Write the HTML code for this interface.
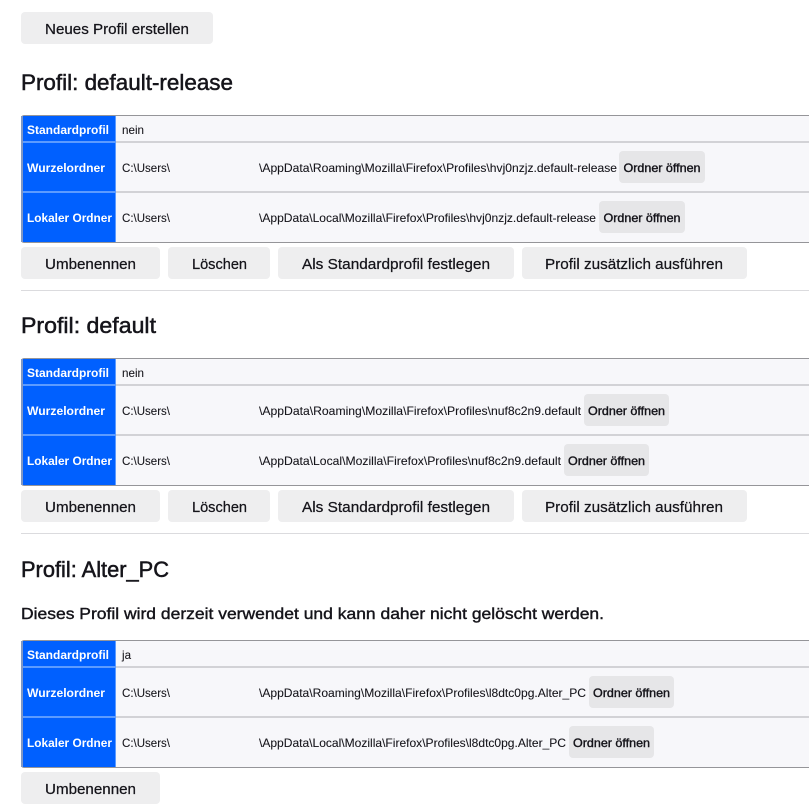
<!DOCTYPE html>
<html lang="de"><head><meta charset="utf-8"><title>Profile</title>
<style>
html,body{margin:0;padding:0;background:#fff;width:809px;height:811px;overflow:hidden}
svg{display:block;font-family:"Liberation Sans",sans-serif}
text{fill:#15141a}
.b{fill:#eeeeef}.o{fill:#e6e6e8}.c{fill:#f7f7fa}.bl{fill:#0060ff}.s{fill:#d2d2d6}.sb{fill:#5c9bff}.bd{fill:#959599}.lb{fill:#7f97c4}
.t15{font-size:15px;stroke:#15141a;stroke-width:.25px}.h{font-size:22px;stroke:#15141a;stroke-width:.5px}.h2{font-size:16px;stroke:#15141a;stroke-width:.4px}
.th{font-size:12px;font-weight:700}text.th{fill:#fff}.td{font-size:12px;stroke:#15141a;stroke-width:.08px}.ob{font-size:12px;stroke:#15141a;stroke-width:.4px}
</style></head><body>
<svg width="809" height="811" viewBox="0 0 809 811" xmlns="http://www.w3.org/2000/svg">
<rect class="b" x="21" y="12" width="192" height="32" rx="4"/>
<text class="t15" x="45" y="34" textLength="144" lengthAdjust="spacingAndGlyphs">Neues Profil erstellen</text>
<text class="h" x="21" y="90" textLength="212" lengthAdjust="spacingAndGlyphs">Profil: default-release</text>

<!-- Table 1 -->
<rect class="bd" x="21" y="115" width="800" height="128" rx="3"/>
<rect class="lb" x="21" y="116" width="2" height="126"/>
<rect class="c" x="116" y="116" width="693" height="126"/>
<rect class="bl" x="23" y="116" width="92" height="126"/>
<rect class="sb" x="115" y="116" width="1" height="126"/>
<rect class="s" x="116" y="141" width="693" height="2"/><rect class="s" x="116" y="191" width="693" height="2"/>
<rect class="sb" x="23" y="141" width="92" height="2"/><rect class="sb" x="23" y="191" width="92" height="2"/>
<text class="th" x="27" y="134" textLength="82" lengthAdjust="spacingAndGlyphs">Standardprofil</text>
<text class="th" x="27" y="172" textLength="78" lengthAdjust="spacingAndGlyphs">Wurzelordner</text>
<text class="th" x="27" y="222" textLength="85" lengthAdjust="spacingAndGlyphs">Lokaler Ordner</text>
<text class="td" x="122" y="134" textLength="22" lengthAdjust="spacingAndGlyphs">nein</text>
<text class="td" x="122" y="172" textLength="48" lengthAdjust="spacingAndGlyphs">C:\Users\</text>
<text class="td" x="259" y="172" textLength="358" lengthAdjust="spacingAndGlyphs">\AppData\Roaming\Mozilla\Firefox\Profiles\hvj0nzjz.default-release</text>
<rect class="o" x="619" y="151" width="86" height="32" rx="4"/>
<text class="ob" x="623.5" y="172" textLength="77" lengthAdjust="spacingAndGlyphs">Ordner öffnen</text>
<text class="td" x="122" y="222" textLength="48" lengthAdjust="spacingAndGlyphs">C:\Users\</text>
<text class="td" x="259" y="222" textLength="337" lengthAdjust="spacingAndGlyphs">\AppData\Local\Mozilla\Firefox\Profiles\hvj0nzjz.default-release</text>
<rect class="o" x="599" y="201" width="86" height="32" rx="4"/>
<text class="ob" x="603.5" y="222" textLength="77" lengthAdjust="spacingAndGlyphs">Ordner öffnen</text>

<rect class="b" x="21" y="247" width="139" height="32" rx="4"/>
<text class="t15" x="45" y="269" textLength="91" lengthAdjust="spacingAndGlyphs">Umbenennen</text>
<rect class="b" x="168" y="247" width="102" height="32" rx="4"/>
<text class="t15" x="192" y="269" textLength="55" lengthAdjust="spacingAndGlyphs">Löschen</text>
<rect class="b" x="278" y="247" width="236" height="32" rx="4"/>
<text class="t15" x="302" y="269" textLength="188" lengthAdjust="spacingAndGlyphs">Als Standardprofil festlegen</text>
<rect class="b" x="522" y="247" width="225" height="32" rx="4"/>
<text class="t15" x="545" y="269" textLength="178" lengthAdjust="spacingAndGlyphs">Profil zusätzlich ausführen</text>
<rect class="s" x="21" y="290" width="788" height="1" opacity=".8"/>

<text class="h" x="21" y="333" textLength="135" lengthAdjust="spacingAndGlyphs">Profil: default</text>

<!-- Table 2 -->
<rect class="bd" x="21" y="358" width="800" height="128" rx="3"/>
<rect class="lb" x="21" y="359" width="2" height="126"/>
<rect class="c" x="116" y="359" width="693" height="126"/>
<rect class="bl" x="23" y="359" width="92" height="126"/>
<rect class="sb" x="115" y="359" width="1" height="126"/>
<rect class="s" x="116" y="384" width="693" height="2"/><rect class="s" x="116" y="434" width="693" height="2"/>
<rect class="sb" x="23" y="384" width="92" height="2"/><rect class="sb" x="23" y="434" width="92" height="2"/>
<text class="th" x="27" y="377" textLength="82" lengthAdjust="spacingAndGlyphs">Standardprofil</text>
<text class="th" x="27" y="415" textLength="78" lengthAdjust="spacingAndGlyphs">Wurzelordner</text>
<text class="th" x="27" y="465" textLength="85" lengthAdjust="spacingAndGlyphs">Lokaler Ordner</text>
<text class="td" x="122" y="377" textLength="22" lengthAdjust="spacingAndGlyphs">nein</text>
<text class="td" x="122" y="415" textLength="48" lengthAdjust="spacingAndGlyphs">C:\Users\</text>
<text class="td" x="259" y="415" textLength="322" lengthAdjust="spacingAndGlyphs">\AppData\Roaming\Mozilla\Firefox\Profiles\nuf8c2n9.default</text>
<rect class="o" x="584" y="394" width="85" height="32" rx="4"/>
<text class="ob" x="588" y="415" textLength="77" lengthAdjust="spacingAndGlyphs">Ordner öffnen</text>
<text class="td" x="122" y="465" textLength="48" lengthAdjust="spacingAndGlyphs">C:\Users\</text>
<text class="td" x="259" y="465" textLength="302" lengthAdjust="spacingAndGlyphs">\AppData\Local\Mozilla\Firefox\Profiles\nuf8c2n9.default</text>
<rect class="o" x="564" y="444" width="85" height="32" rx="4"/>
<text class="ob" x="568" y="465" textLength="77" lengthAdjust="spacingAndGlyphs">Ordner öffnen</text>

<rect class="b" x="21" y="490" width="139" height="32" rx="4"/>
<text class="t15" x="45" y="512" textLength="91" lengthAdjust="spacingAndGlyphs">Umbenennen</text>
<rect class="b" x="168" y="490" width="102" height="32" rx="4"/>
<text class="t15" x="192" y="512" textLength="55" lengthAdjust="spacingAndGlyphs">Löschen</text>
<rect class="b" x="278" y="490" width="236" height="32" rx="4"/>
<text class="t15" x="302" y="512" textLength="188" lengthAdjust="spacingAndGlyphs">Als Standardprofil festlegen</text>
<rect class="b" x="522" y="490" width="225" height="32" rx="4"/>
<text class="t15" x="545" y="512" textLength="178" lengthAdjust="spacingAndGlyphs">Profil zusätzlich ausführen</text>
<rect class="s" x="21" y="533" width="788" height="1" opacity=".8"/>

<text class="h" x="21" y="577" textLength="148" lengthAdjust="spacingAndGlyphs">Profil: Alter_PC</text>
<text class="h2" x="21" y="619" textLength="583" lengthAdjust="spacingAndGlyphs">Dieses Profil wird derzeit verwendet und kann daher nicht gelöscht werden.</text>

<!-- Table 3 -->
<rect class="bd" x="21" y="640" width="800" height="128" rx="3"/>
<rect class="lb" x="21" y="641" width="2" height="126"/>
<rect class="c" x="116" y="641" width="693" height="126"/>
<rect class="bl" x="23" y="641" width="92" height="126"/>
<rect class="sb" x="115" y="641" width="1" height="126"/>
<rect class="s" x="116" y="666" width="693" height="2"/><rect class="s" x="116" y="716" width="693" height="2"/>
<rect class="sb" x="23" y="666" width="92" height="2"/><rect class="sb" x="23" y="716" width="92" height="2"/>
<text class="th" x="27" y="659" textLength="82" lengthAdjust="spacingAndGlyphs">Standardprofil</text>
<text class="th" x="27" y="697" textLength="78" lengthAdjust="spacingAndGlyphs">Wurzelordner</text>
<text class="th" x="27" y="747" textLength="85" lengthAdjust="spacingAndGlyphs">Lokaler Ordner</text>
<text class="td" x="122" y="659" textLength="9" lengthAdjust="spacingAndGlyphs">ja</text>
<text class="td" x="122" y="697" textLength="48" lengthAdjust="spacingAndGlyphs">C:\Users\</text>
<text class="td" x="259" y="697" textLength="327" lengthAdjust="spacingAndGlyphs">\AppData\Roaming\Mozilla\Firefox\Profiles\l8dtc0pg.Alter_PC</text>
<rect class="o" x="589" y="676" width="85" height="32" rx="4"/>
<text class="ob" x="593" y="697" textLength="77" lengthAdjust="spacingAndGlyphs">Ordner öffnen</text>
<text class="td" x="122" y="747" textLength="48" lengthAdjust="spacingAndGlyphs">C:\Users\</text>
<text class="td" x="259" y="747" textLength="307" lengthAdjust="spacingAndGlyphs">\AppData\Local\Mozilla\Firefox\Profiles\l8dtc0pg.Alter_PC</text>
<rect class="o" x="569" y="726" width="85" height="32" rx="4"/>
<text class="ob" x="573" y="747" textLength="77" lengthAdjust="spacingAndGlyphs">Ordner öffnen</text>

<rect class="b" x="21" y="772" width="139" height="32" rx="4"/>
<text class="t15" x="45" y="794" textLength="91" lengthAdjust="spacingAndGlyphs">Umbenennen</text>
</svg>
</body></html>
